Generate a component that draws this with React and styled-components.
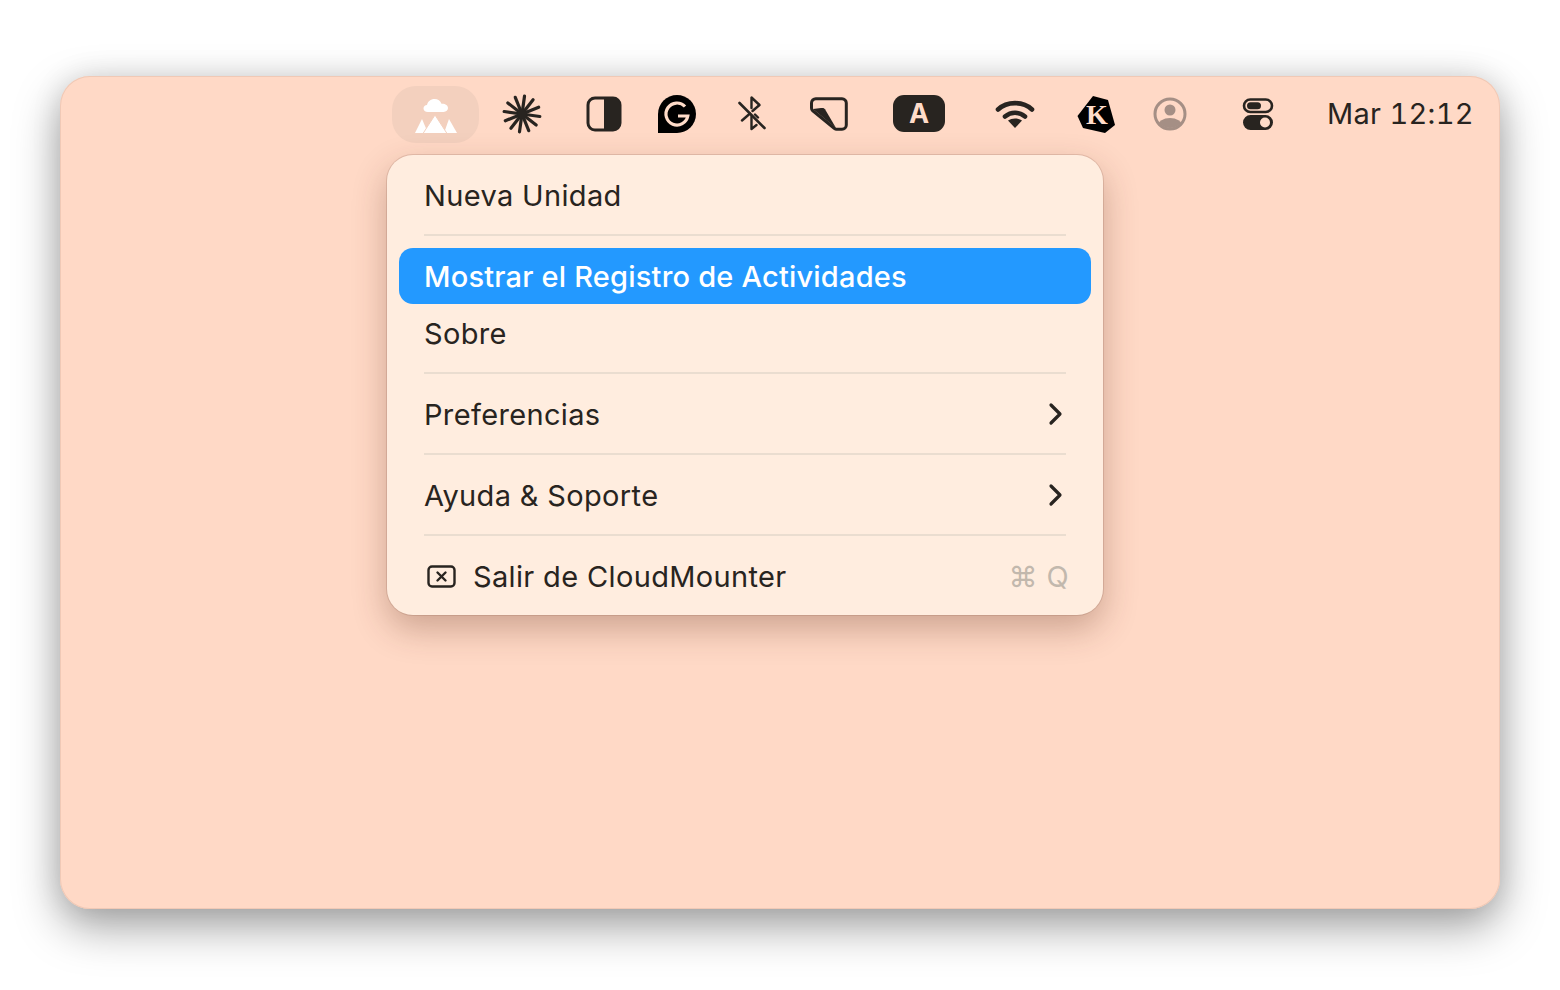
import React from "react";
import styled, { createGlobalStyle } from "styled-components";

const ink = "#282420";
const peach = "#ffdcc9";

const GlobalStyle = createGlobalStyle`
  html, body {
    margin: 0;
    padding: 0;
    background: #fff;
    overflow: hidden;
  }
  * { box-sizing: border-box; }
`;

const Page = styled.div`
  width: 1560px;
  height: 990px;
  padding: 76px 60px 0;
  font-family: Inter, "Liberation Sans", sans-serif;
  color: ${ink};
`;

const Desktop = styled.div`
  position: relative;
  width: 1440px;
  height: 833px;
  border-radius: 30px;
  background: #ffd9c6;
  box-shadow: inset 0 0 0 1px #f0c9b6, 0 18px 46px rgba(0, 0, 0, 0.36), 0 0 30px rgba(0, 0, 0, 0.1);
`;

const MenuBar = styled.div`
  display: flex;
  align-items: center;
  height: 57px;
  margin-top: 10px;
  padding-left: 332px;
  position: absolute;
  top: 0;
  left: 0;
  right: 0;
`;

const Slot = styled.div`
  display: flex;
  flex: none;
  align-items: center;
  justify-content: center;
  width: ${(p) => p.$w}px;
  height: 57px;
  padding-bottom: ${(p) => (p.$active ? 0 : 2)}px;
  border-radius: 24px;
  background: ${(p) => (p.$active ? "#f3d0be" : "transparent")};
`;

const Clock = styled.div`
  margin: 0 0 3px 16px;
  font-size: 29px;
  letter-spacing: 0.3px;
  font-variant-numeric: tabular-nums;
  white-space: nowrap;
`;

const Menu = styled.div`
  position: absolute;
  top: 79px;
  left: 327px;
  width: 716px;
  padding: 12px 12px 11px;
  border-radius: 26px;
  background: #ffeddf;
  box-shadow: 0 0 0 1px rgba(120, 80, 60, 0.18), 0 14px 34px rgba(90, 40, 20, 0.3);
`;

const Item = styled.div`
  display: flex;
  align-items: center;
  height: 56px;
  padding: 0 27px 0 ${(p) => (p.$icon ? 28 : 25)}px;
  border-radius: 14px;
  font-size: 29px;
  letter-spacing: ${(p) => (p.$on ? 0.2 : 0.35)}px;
  color: ${(p) => (p.$on ? "#fff" : ink)};
  background: ${(p) => (p.$on ? "#2399ff" : "transparent")};
  font-weight: ${(p) => (p.$on ? 500 : 400)};
  & + & {
    margin-top: 1px;
  }
`;

const Label = styled.span`
  flex: 1;
  white-space: nowrap;
`;

const Divider = styled.div`
  height: 2px;
  margin: 11px 25px 12px;
  background: #eaddd0;
`;

const Shortcut = styled.span`
  margin-right: -5px;
  font-size: 29px;
  color: #c2b8ad;
  white-space: nowrap;
  font-weight: 400;
`;

const ExitBox = styled.svg`
  flex: none;
  margin-right: 17px;
`;

const CloudIcon = () => (
  <svg width="44" height="38" viewBox="0 0 44 38" fill="#fff">
    <path d="M14 16c-3 0-4.500-1.800-4.500-3.600 0-2 1.500-3.400 3.500-3.500C13.800 5.600 16.600 3 20.500 3c3.400 0 6 2 7 4.800 3.500-.3 6.500 1.400 6.500 4.300 0 2.300-1.800 3.900-4.500 3.900z" />
    <path d="M1 37L8 23l6 14z" />
    <path d="M30 37l5-14 8 14z" />
    <path d="M9 37.500L21 19l12 18.500z" stroke="#f3d0be" strokeWidth="1" />
  </svg>
);

const StarIcon = () => {
  const spokes = Array.from({ length: 12 }, (_, i) => 8 + (i * 360) / 12);
  return (
    <svg width="40" height="40" viewBox="-20 -20 40 40" stroke={ink} strokeWidth="3.200" strokeLinecap="round">
      {spokes.map((a) => (
        <line key={a} x1="0" y1="0" x2="18" y2="0" transform={`rotate(${a})`} />
      ))}
      <circle r="5" fill={ink} stroke="none" />
    </svg>
  );
};

const ContrastIcon = () => (
  <svg width="36" height="36" viewBox="0 0 36 36">
    <rect x="2" y="2" width="32" height="32" rx="7" fill="none" stroke={ink} strokeWidth="3" />
    <path d="M18 2h9a7 7 0 0 1 7 7v18a7 7 0 0 1-7 7h-9z" fill={ink} />
  </svg>
);

const GrammarlyIcon = () => (
  <svg width="38" height="38" viewBox="0 0 38 38">
    <path d="M19 0a19 19 0 0 1 0 38H0V19A19 19 0 0 1 19 0z" fill="#000" />
    <path d="M27 11.500A11 11 0 1 0 29.800 21H20" fill="none" stroke={peach} strokeWidth="3.200" />
  </svg>
);

const BluetoothIcon = () => (
  <svg width="30" height="36" viewBox="0 0 30 36" fill="none" stroke={ink} strokeLinejoin="round" strokeLinecap="round">
    <path d="M5 24.500L13 17.500M15.500 15L22.500 9 14.500 1.500V12M14.500 20V33L19.500 29M21 21.500L18 18.500" strokeWidth="2.400" />
    <path d="M2.500 7l25 25" strokeWidth="2.600" />
  </svg>
);

const FoldIcon = () => (
  <svg width="38" height="34" viewBox="0 0 38 34">
    <path d="M6 1.700h26a4.300 4.300 0 0 1 4.300 4.300v22a4.300 4.300 0 0 1-4.300 4.300h-5.500a3 3 0 0 1-2-.8L2.500 13.500C1.600 12.800 1.500 12 1.500 11V6A4.300 4.300 0 0 1 6 1.700z" fill="none" stroke={ink} strokeWidth="3" />
    <path d="M3 12l8-1c2-.2 3-.2 4 1.300L26 31z" fill={ink} />
  </svg>
);

const Badge = styled.div`
  display: flex;
  align-items: center;
  justify-content: center;
  width: 52px;
  height: 37px;
  border-radius: 11px;
  background: ${ink};
  color: ${peach};
  font-size: 27px;
  font-weight: 700;
  font-family: Inter, sans-serif;
`;

const WifiIcon = () => (
  <svg width="40" height="30" viewBox="0 0 40 30" fill="none" stroke={ink} strokeWidth="4.600" strokeLinecap="round">
    <path d="M3 10.500C12 2 28 2 37 10.500" />
    <path d="M10 17.500c6-5 14-5 20 0" />
    <path d="M13 21.500c4-2.800 10-2.800 14 0L20 29z" fill={ink} stroke="none" />
  </svg>
);

const KeyIcon = () => (
  <svg width="38" height="38" viewBox="0 0 38 38">
    <path d="M0.500 21L16 1 31 5l7 25-10 8-22-5z" fill="#000" />
    <text x="20" y="29" textAnchor="middle" fontFamily="'Liberation Serif', serif" fontWeight="700" fontSize="28" fill={peach}>K</text>
  </svg>
);

const PersonIcon = () => (
  <svg width="34" height="34" viewBox="0 0 34 34">
    <defs>
      <clipPath id="person-clip">
        <circle cx="17" cy="17" r="14" />
      </clipPath>
    </defs>
    <circle cx="17" cy="17" r="15" fill="none" stroke="#a58f85" strokeWidth="3" />
    <circle cx="17" cy="13" r="5.500" fill="#a58f85" />
    <ellipse cx="17" cy="29" rx="12" ry="8" fill="#a58f85" clipPath="url(#person-clip)" />
  </svg>
);

const ToggleIcon = () => (
  <svg width="32" height="32" viewBox="0 0 32 32">
    <rect x="2" y="1.500" width="28" height="12.500" rx="6.250" fill="none" stroke={ink} strokeWidth="2.600" />
    <rect x="5" y="4.200" width="14" height="7" rx="3.500" fill={ink} />
    <rect x="1" y="17" width="30" height="15" rx="7.500" fill={ink} />
    <circle cx="23" cy="24.500" r="5" fill={peach} />
  </svg>
);

const Chevron = () => (
  <svg width="16" height="24" viewBox="0 0 16 24" fill="none" stroke={ink} strokeWidth="3.200" strokeLinecap="round" strokeLinejoin="round">
    <path d="M3 3l9 9-9 9" />
  </svg>
);

const ExitIcon = () => (
  <ExitBox width="29" height="23" viewBox="0 0 29 23" fill="none" stroke={ink} strokeWidth="2.400" strokeLinecap="round">
    <rect x="1.500" y="1.500" width="26" height="20" rx="3.500" />
    <path d="M10.500 7.500l8 8M18.500 7.500l-8 8" />
  </ExitBox>
);

const bar = [
  { id: "cloud", w: 87, icon: <CloudIcon />, active: true },
  { id: "star", w: 86, icon: <StarIcon /> },
  { id: "contrast", w: 78, icon: <ContrastIcon /> },
  { id: "grammarly", w: 68, icon: <GrammarlyIcon /> },
  { id: "bluetooth", w: 82, icon: <BluetoothIcon /> },
  { id: "fold", w: 72, icon: <FoldIcon /> },
  { id: "badge", w: 108, icon: <Badge>A</Badge> },
  { id: "wifi", w: 84, icon: <WifiIcon /> },
  { id: "key", w: 78, icon: <KeyIcon /> },
  { id: "person", w: 70, icon: <PersonIcon /> },
  { id: "toggle", w: 106, icon: <ToggleIcon /> },
];

export default function App() {
  return (
    <Page>
      <GlobalStyle />
      <Desktop>
        <MenuBar>
          {bar.map((item) => (
            <Slot key={item.id} $w={item.w} $active={item.active}>
              {item.icon}
            </Slot>
          ))}
          <Clock>Mar 12:12</Clock>
        </MenuBar>
        <Menu>
          <Item>
            <Label>Nueva Unidad</Label>
          </Item>
          <Divider />
          <Item $on>
            <Label>Mostrar el Registro de Actividades</Label>
          </Item>
          <Item>
            <Label>Sobre</Label>
          </Item>
          <Divider />
          <Item>
            <Label>Preferencias</Label>
            <Chevron />
          </Item>
          <Divider />
          <Item>
            <Label>Ayuda &amp; Soporte</Label>
            <Chevron />
          </Item>
          <Divider />
          <Item $icon>
            <ExitIcon />
            <Label>Salir de CloudMounter</Label>
            <Shortcut>⌘ Q</Shortcut>
          </Item>
        </Menu>
      </Desktop>
    </Page>
  );
}
